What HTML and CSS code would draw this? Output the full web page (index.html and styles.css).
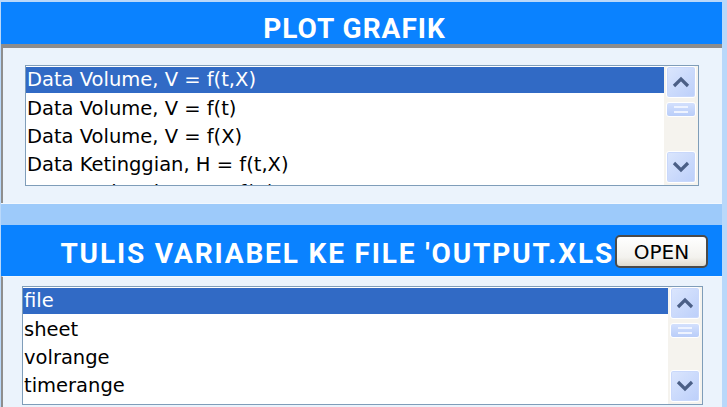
FILE: index.html
```html
<!DOCTYPE html>
<html lang="en">
<head>
    <meta charset="UTF-8">
    <meta name="viewport" content="width=device-width, initial-scale=1.0">
    <title>Plot Grafik</title>
    <link rel="stylesheet" href="styles.css">
</head>
<body>
    <div class="frame">
        <section class="group">
            <div class="caption caption-plot">PLOT GRAFIK</div>
            <div class="group-body body-plot">
                <div class="listbox lb-plot">
                    <ul class="items">
                        <li class="sel">Data Volume, V = f(t,X)</li>
                        <li>Data Volume, V = f(t)</li>
                        <li>Data Volume, V = f(X)</li>
                        <li>Data Ketinggian, H = f(t,X)</li>
                        <li>Data Ketinggian, H = f(X)</li>
                    </ul>
                    <div class="scroll">
                        <div class="sb-btn">
                            <svg width="18" height="12" viewBox="0 0 18 12"><path d="M2 10 L9 3 L16 10" fill="none" stroke="#4b5f86" stroke-width="3.2" stroke-linejoin="miter"/></svg>
                        </div>
                        <div class="track"><span class="thumb"></span></div>
                        <div class="sb-btn">
                            <svg width="18" height="12" viewBox="0 0 18 12"><path d="M2 2 L9 9 L16 2" fill="none" stroke="#4b5f86" stroke-width="3.2" stroke-linejoin="miter"/></svg>
                        </div>
                    </div>
                </div>
            </div>
        </section>

        <div class="band"></div>

        <section class="group">
            <div class="caption caption-tulis">
                <span class="caption-text">TULIS VARIABEL KE FILE 'OUTPUT.XLS</span>
                <button class="open">OPEN</button>
            </div>
            <div class="group-body body-tulis">
                <div class="listbox lb-tulis">
                    <ul class="items">
                        <li class="sel">file</li>
                        <li>sheet</li>
                        <li>volrange</li>
                        <li>timerange</li>
                    </ul>
                    <div class="scroll">
                        <div class="sb-btn">
                            <svg width="18" height="12" viewBox="0 0 18 12"><path d="M2 10 L9 3 L16 10" fill="none" stroke="#4b5f86" stroke-width="3.2" stroke-linejoin="miter"/></svg>
                        </div>
                        <div class="track"><span class="thumb"></span></div>
                        <div class="sb-btn">
                            <svg width="18" height="12" viewBox="0 0 18 12"><path d="M2 2 L9 9 L16 2" fill="none" stroke="#4b5f86" stroke-width="3.2" stroke-linejoin="miter"/></svg>
                        </div>
                    </div>
                </div>
            </div>
        </section>
    </div>
</body>
</html>
```

FILE: styles.css
```css
body {
    margin: 0;
    padding: 0;
    background-color: #b9d8fa;
    font-family: "DejaVu Sans", Verdana, sans-serif;
    overflow: hidden;
}
.frame {
    width: 721px;
    padding: 2px 0 0 1px;
}
.caption {
    background-color: #0a82ff;
    color: #fff;
    font-family: Roboto, "DejaVu Sans", sans-serif;
    font-weight: bold;
    font-size: 28px;
    letter-spacing: 1px;
    text-align: center;
    box-sizing: border-box;
}
.caption-plot {
    height: 42px;
    line-height: 30px;
    padding-top: 12px;
    padding-right: 14px;
}
.group-body {
    background-color: #ebf3fc;
    border-left: 2px solid #8e8e8e;
    box-sizing: border-box;
}
.body-plot {
    height: 159px;
    border-top: 4px solid #8c8c8c;
    padding: 17px 0 0 22px;
}
.band {
    height: 21px;
    background-color: #9dcafa;
    border-top: 1px solid #f3f8fe;
}
.caption-tulis {
    height: 51px;
    display: flex;
    align-items: center;
    justify-content: flex-end;
    padding-right: 14px;
    letter-spacing: 1.85px;
}
.caption-text {
    margin-right: 1px;
    padding-top: 5px;
}
.open {
    width: 93px;
    height: 33px;
    margin-top: 2px;
    border: 2px solid #4a4a4a;
    border-radius: 5px;
    background: linear-gradient(#ffffff, #f3f2ee 70%, #dedbd0);
    font-family: "DejaVu Sans", sans-serif;
    font-weight: normal;
    font-size: 20px;
    letter-spacing: 0;
    color: #000;
    padding: 0;
}
.body-tulis {
    height: 132px;
    border-top: 1px solid #f3f8fe;
    padding: 9px 0 0 19px;
}
.listbox {
    display: flex;
    background-color: #fff;
    border: 1px solid #7f9db9;
    overflow: hidden;
}
.lb-plot {
    width: 672px;
    height: 119px;
}
.lb-tulis {
    width: 679px;
    height: 117px;
}
.items {
    flex: 1;
    list-style: none;
    margin: 0;
    padding: 1px 0 0 0;
    font-size: 19.5px;
    line-height: 28px;
    color: #000;
}
.items li {
    height: 28px;
    padding-left: 1px;
    white-space: nowrap;
}
.items li.sel {
    background-color: #316ac5;
    color: #fff;
    height: 26px;
    line-height: 26px;
    margin-bottom: 2px;
}
.scroll {
    width: 34px;
    display: flex;
    flex-direction: column;
    background-color: #f5f3ee;
    padding: 0 2px 2px 2px;
    box-sizing: border-box;
}
.sb-btn {
    height: 30px;
    flex-shrink: 0;
    border: 1px solid #fff;
    border-radius: 3px;
    background: linear-gradient(135deg, #dbe6fd, #bccffa);
    box-shadow: inset 0 0 0 1px #c9d8fb;
    display: flex;
    align-items: center;
    justify-content: center;
}
.track {
    flex: 1;
    padding-top: 4px;
}
.thumb {
    display: block;
    height: 15px;
    border-radius: 3px;
    background: linear-gradient(#d3e0fd, #b9cdf9);
    border: 1px solid #fff;
    box-sizing: border-box;
    position: relative;
}
.thumb::before {
    content: "";
    position: absolute;
    left: 7px;
    right: 7px;
    top: 3px;
    height: 7px;
    border-top: 2px solid #eef3ff;
    border-bottom: 2px solid #eef3ff;
    box-sizing: border-box;
}
```
